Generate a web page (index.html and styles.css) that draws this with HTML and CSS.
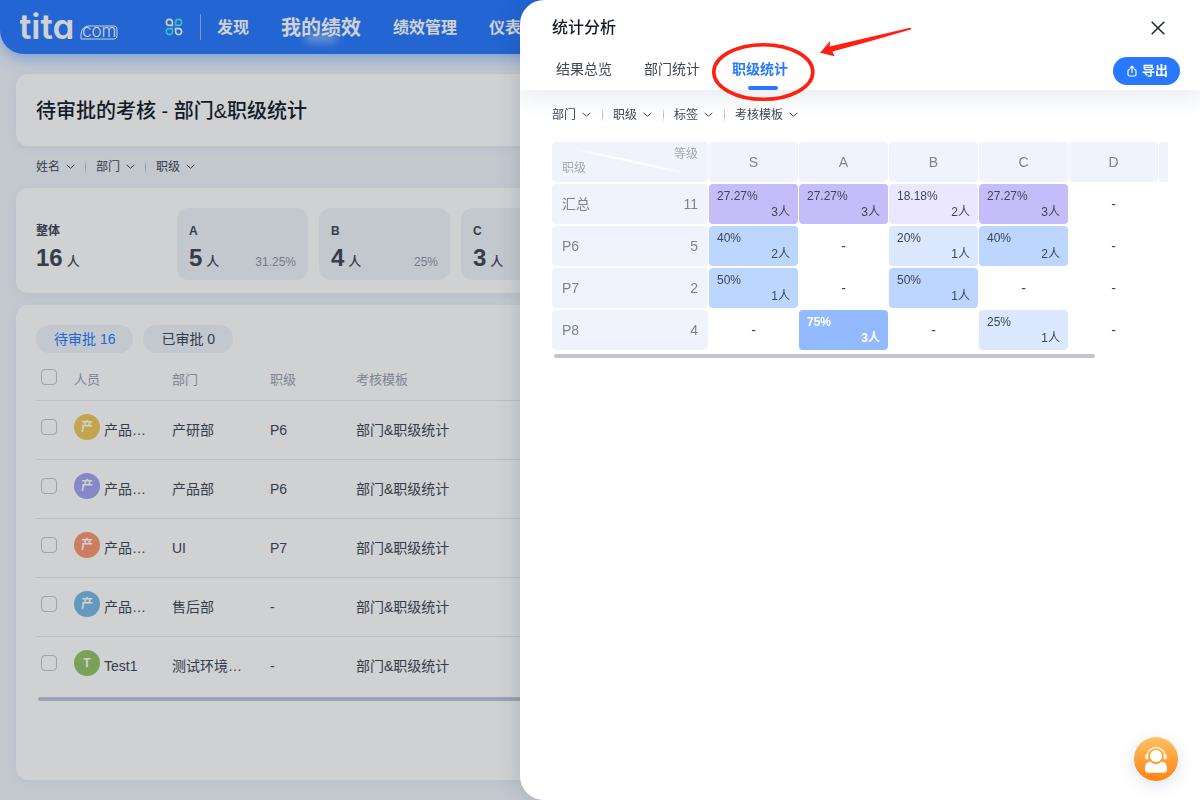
FILE: index.html
```html
<!DOCTYPE html>
<html lang="zh-CN">
<head>
<meta charset="utf-8">
<title>统计分析</title>
<link rel="stylesheet" href="styles.css">
</head>
<body>
<svg class="defs" aria-hidden="true">
  <symbol id="chev" viewBox="0 0 9 6"><path d="M1 1.2 4.5 4.2 8 1.2" fill="none" stroke="currentColor" stroke-width="1" stroke-linecap="round" stroke-linejoin="round"/></symbol>
</svg>
<div class="page">
  <header class="topbar">
    <svg class="logo" width="100" height="44" viewBox="0 0 100 44" role="img" aria-label="tita.com">
      <text class="logo-main" x="-1" y="34">tita</text>
      <path d="M61 34V29Q62 21 69 21H94Q97 21 97 24V31Q97 34 94 34H61" fill="none" stroke="#fff" stroke-width="1"/>
      <text class="logo-sub" x="62" y="32">com</text>
    </svg>
    <button class="apps" aria-label="应用">
      <svg width="18" height="18" viewBox="0 0 18 18" fill="none" stroke-width="1.6">
        <path d="M7.4 7.4H4.4A3 3 0 1 1 7.4 4.4Z" stroke="#fff"/>
        <path d="M10.6 7.4V4.4A3 3 0 1 1 13.6 7.4Z" stroke="#4ce6ec"/>
        <path d="M7.4 10.6V13.6A3 3 0 1 1 4.4 10.6Z" stroke="#4ce6ec"/>
        <path d="M10.6 10.6H13.6A3 3 0 1 1 10.6 13.6Z" stroke="#fff"/>
      </svg>
    </button>
    <nav class="nav">
      <a href="#">发现</a>
      <a href="#" class="current">我的绩效</a>
      <a href="#">绩效管理</a>
      <a href="#">仪表盘</a>
    </nav>
  </header>
  <main class="main">
    <section class="card title-card"><h1>待审批的考核 - 部门&amp;职级统计</h1></section>
    <div class="filters page-filters">
      <button>姓名<svg><use href="#chev"/></svg></button>
      <button>部门<svg><use href="#chev"/></svg></button>
      <button>职级<svg><use href="#chev"/></svg></button>
    </div>
    <section class="card stats">
      <div class="stat total"><h2>整体</h2><p><b>16</b><i>人</i></p></div>
      <div class="stat"><h2>A</h2><p><b>5</b><i>人</i><span>31.25%</span></p></div>
      <div class="stat"><h2>B</h2><p><b>4</b><i>人</i><span>25%</span></p></div>
      <div class="stat"><h2>C</h2><p><b>3</b><i>人</i></p></div>
    </section>
    <section class="card list">
      <div class="pills">
        <button class="on">待审批 16</button>
        <button>已审批 0</button>
      </div>
      <table class="people">
        <colgroup><col class="c-check"><col class="c-name"><col class="c-dept"><col class="c-level"><col></colgroup>
        <thead>
          <tr><th><input type="checkbox" aria-label="全选"></th><th>人员</th><th>部门</th><th>职级</th><th>考核模板</th></tr>
        </thead>
        <tbody>
          <tr><td><input type="checkbox" aria-label="选择第1行"></td><td><div class="who"><span class="avatar gold">产</span>产品…</div></td><td>产研部</td><td>P6</td><td>部门&amp;职级统计</td></tr>
          <tr><td><input type="checkbox" aria-label="选择第2行"></td><td><div class="who"><span class="avatar violet">产</span>产品…</div></td><td>产品部</td><td>P6</td><td>部门&amp;职级统计</td></tr>
          <tr><td><input type="checkbox" aria-label="选择第3行"></td><td><div class="who"><span class="avatar coral">产</span>产品…</div></td><td>UI</td><td>P7</td><td>部门&amp;职级统计</td></tr>
          <tr><td><input type="checkbox" aria-label="选择第4行"></td><td><div class="who"><span class="avatar sky">产</span>产品…</div></td><td>售后部</td><td>-</td><td>部门&amp;职级统计</td></tr>
          <tr><td><input type="checkbox" aria-label="选择第5行"></td><td><div class="who"><span class="avatar green">T</span>Test1</div></td><td>测试环境…</td><td>-</td><td>部门&amp;职级统计</td></tr>
        </tbody>
      </table>
      <div class="scrollbar"></div>
    </section>
  </main>
</div>
<div class="mask"></div>
<aside class="drawer" aria-label="统计分析">
  <header class="drawer-head">
    <div class="drawer-title">
      <h2>统计分析</h2>
      <button class="close" aria-label="关闭"><svg width="14" height="14" viewBox="0 0 14 14"><path d="M.7.7 13.3 13.3M13.3.7.7 13.3" stroke="#1d2633" stroke-width="1.5"/></svg></button>
    </div>
    <div class="drawer-bar">
      <nav class="tabs">
        <button>结果总览</button>
        <button>部门统计</button>
        <button class="on">职级统计</button>
      </nav>
      <button class="export"><svg width="10" height="12" viewBox="0 0 10 12" fill="none" stroke="#fff" stroke-width="1.2" stroke-linecap="round" stroke-linejoin="round"><path d="M2.500 4.500Q1 4.500 1 6V9.500Q1 11 2.500 11H7.500Q9 11 9 9.500V6Q9 4.500 7.500 4.500M5 7.500V1.500M3.200 3 5 1.200 6.800 3"/></svg>导出</button>
    </div>
  </header>
  <div class="drawer-body">
    <div class="filters drawer-filters">
      <button>部门<svg><use href="#chev"/></svg></button>
      <button>职级<svg><use href="#chev"/></svg></button>
      <button>标签<svg><use href="#chev"/></svg></button>
      <button>考核模板<svg><use href="#chev"/></svg></button>
    </div>
    <div class="matrix-view">
      <table class="matrix">
        <colgroup><col class="m-first"><col><col><col><col><col><col></colgroup>
        <thead>
          <tr>
            <th class="corner"><div><svg viewBox="0 0 156 40" preserveAspectRatio="none"><defs><linearGradient id="fade"><stop offset="0" stop-color="#fff" stop-opacity="0"/><stop offset=".4" stop-color="#fff"/><stop offset=".65" stop-color="#fff"/><stop offset="1" stop-color="#fff" stop-opacity="0"/></linearGradient></defs><path d="M12 5 144 33" stroke="url(#fade)" stroke-width="2"/></svg><span class="col-label">等级</span><span class="row-label">职级</span></div></th>
            <th>S</th><th>A</th><th>B</th><th>C</th><th>D</th><th></th>
          </tr>
        </thead>
        <tbody>
          <tr><th><div class="row-head"><span>汇总</span><span>11</span></div></th>
            <td class="p2"><div class="cell"><span>27.27%</span><span>3人</span></div></td>
            <td class="p2"><div class="cell"><span>27.27%</span><span>3人</span></div></td>
            <td class="p1"><div class="cell"><span>18.18%</span><span>2人</span></div></td>
            <td class="p2"><div class="cell"><span>27.27%</span><span>3人</span></div></td>
            <td>-</td><td></td></tr>
          <tr><th><div class="row-head"><span>P6</span><span>5</span></div></th>
            <td class="b2"><div class="cell"><span>40%</span><span>2人</span></div></td>
            <td>-</td>
            <td class="b1"><div class="cell"><span>20%</span><span>1人</span></div></td>
            <td class="b2"><div class="cell"><span>40%</span><span>2人</span></div></td>
            <td>-</td><td></td></tr>
          <tr><th><div class="row-head"><span>P7</span><span>2</span></div></th>
            <td class="b2"><div class="cell"><span>50%</span><span>1人</span></div></td>
            <td>-</td>
            <td class="b2"><div class="cell"><span>50%</span><span>1人</span></div></td>
            <td>-</td><td>-</td><td></td></tr>
          <tr><th><div class="row-head"><span>P8</span><span>4</span></div></th>
            <td>-</td>
            <td class="b3"><div class="cell"><span>75%</span><span>3人</span></div></td>
            <td>-</td>
            <td class="b1"><div class="cell"><span>25%</span><span>1人</span></div></td>
            <td>-</td><td></td></tr>
        </tbody>
      </table>
    </div>
    <div class="scrollbar matrix-scroll"></div>
  </div>
  <svg class="marker" width="210" height="80" viewBox="0 0 210 80" aria-hidden="true">
    <ellipse cx="53.300" cy="47" rx="49.500" ry="27.300" fill="none" stroke="#ff2012" stroke-width="3.600"/>
    <path d="M110 27.700 120.200 16 119.600 21.500 200 2.800Q202 3 200.700 4.500Q162 16 122.500 26.500L124.500 31.200Z" fill="#ff2012"/>
  </svg>
  <button class="support" aria-label="在线客服">
    <svg width="44" height="44" viewBox="0 0 44 44">
      <defs><linearGradient id="orange" x1="0" y1="0" x2="0" y2="1"><stop offset="0" stop-color="#ffc062"/><stop offset="1" stop-color="#ff8412"/></linearGradient></defs>
      <circle cx="22" cy="22" r="22" fill="url(#orange)"/>
      <path d="M13 19a9 8.500 0 0 1 18 0" fill="none" stroke="#fff2de" stroke-width="1.500"/>
      <rect x="11.200" y="17" width="3.200" height="5.500" rx="1.500" fill="#fff2de"/>
      <rect x="29.600" y="17" width="3.200" height="5.500" rx="1.500" fill="#fff2de"/>
      <circle cx="22" cy="19" r="6" fill="#fff"/>
      <path d="M14 25.200Q16.500 24.200 18 25.800Q22 28.500 26 25.800Q27.500 24.200 30 25.200Q33 27 33 32Q33 35.800 30 35.800H14Q11 35.800 11 32Q11 27 14 25.200Z" fill="#fff"/>
    </svg>
  </button>
</aside>
</body>
</html>
```

FILE: styles.css
```css
* { box-sizing: border-box; }
body {
  margin: 0;
  height: 100vh;
  overflow: hidden;
  background: #f0f4fb;
  color: #3f4755;
  font: 14px/20px "Liberation Sans", "Noto Sans CJK SC", sans-serif;
}
h1, h2, p { margin: 0; }
button { margin: 0; padding: 0; border: 0; background: none; color: inherit; font: inherit; cursor: pointer; }
a { color: inherit; text-decoration: none; }
table { border-collapse: separate; table-layout: fixed; }
th { font-weight: 400; text-align: left; }
.defs { position: absolute; width: 0; height: 0; }

.page { display: flex; flex-direction: column; min-height: 100vh; }
.topbar {
  display: flex;
  align-items: center;
  height: 54px;
  padding-left: 20px;
  border-radius: 0 0 24px 24px;
  background: #2879ff;
  box-shadow: 0 4px 16px rgba(40, 121, 255, .45);
  color: #fff;
}
.logo { flex: none; margin-right: 45px; fill: #fff; }
.logo-main { font: 600 35px/1 Inter, sans-serif; font-feature-settings: "cv11"; }
.logo-sub { font: 300 17px/1 Inter, sans-serif; }
.apps { display: flex; }
.nav {
  display: flex;
  align-items: center;
  gap: 32px;
  height: 26px;
  margin-left: 17px;
  padding: 2px 0 0 16px;
  border-left: 1px solid rgba(255, 255, 255, .5);
  font-size: 16px;
  font-weight: 700;
  white-space: nowrap;
}
.current { position: relative; font-size: 20px; }
.current::after {
  content: "";
  position: absolute;
  left: 24px;
  right: 24px;
  bottom: -4px;
  height: 8px;
  border-radius: 4px;
  background: rgba(255, 255, 255, .5);
  filter: blur(4px);
}

.main { display: flex; flex: 1; flex-direction: column; padding: 20px 16px; }
.card { border-radius: 12px; background: #fff; box-shadow: 0 2px 8px rgba(127, 145, 180, .1); }
.title-card { padding: 23px 20px 21px; }
.title-card h1 { color: #141c28; font-size: 20px; line-height: 28px; font-weight: 500; }

.filters { display: flex; align-items: center; font-size: 12px; }
.filters button { display: flex; align-items: center; gap: 6px; }
.filters svg { width: 9px; height: 6px; }
.filters button + button::before {
  content: "";
  width: 1px;
  height: 14px;
  margin: 0 4px 0 10px;
  background: linear-gradient(transparent, #a9b2c5, transparent);
}
.page-filters { height: 42px; padding-left: 20px; }

.stats { display: flex; gap: 11px; padding: 20px 20px 13px; }
.stat { width: 131px; height: 72px; padding: 13px 12px; border-radius: 12px; background: #f0f4fa; }
.stat.total { width: 130px; padding-left: 0; background: none; }
.stat h2 { font-size: 12px; font-weight: 700; }
.stat p { display: flex; align-items: baseline; padding-top: 5px; line-height: 24px; }
.stat b { font-size: 24px; }
.stat i { margin-left: 4px; font-size: 13px; font-style: normal; font-weight: 500; }
.stat span { margin-left: auto; color: #8c94a3; font-size: 12px; }

.list { flex: 1; margin-top: 12px; padding: 20px; }
.pills { display: flex; gap: 10px; }
.pills button { height: 28px; padding: 0 18px; border-radius: 14px; background: #f0f4fa; }
.pills .on { color: #2879ff; }
.people { width: 100%; margin-top: 4px; border-spacing: 0; }
.c-check { width: 38px; }
.c-name, .c-dept { width: 98px; }
.c-level { width: 86px; }
.people th { height: 44px; padding: 2px 0 0; border-bottom: 1px solid #e6e8ec; color: #9aa1b0; font-size: 13px; }
.people td { height: 59px; padding: 0; border-bottom: 1px solid #e6e8ec; }
.people tr:last-child td { height: 58px; border-bottom: 0; }
.people thead tr:last-child th { height: 44px; border-bottom: 1px solid #e6e8ec; }
.people input {
  display: block;
  width: 16px;
  height: 16px;
  margin: 0 0 6px 5px;
  appearance: none;
  border: 1px solid #bec5d4;
  border-radius: 4px;
  background: #fff;
}
.who { display: flex; align-items: center; gap: 4px; }
.avatar {
  width: 26px;
  height: 26px;
  margin-bottom: 6px;
  border-radius: 50%;
  color: #fff;
  font-size: 12px;
  font-weight: 700;
  line-height: 26px;
  text-align: center;
}
.gold { background: #f0c75a; }
.violet { background: #a3a4ef; }
.coral { background: #fb9870; }
.sky { background: #7ab8e3; }
.green { background: #97c268; }
.scrollbar { height: 4px; margin: 2px 2px 0; border-radius: 2px; background: #bec5d4; }

.mask { position: fixed; inset: 0; background: rgba(16, 24, 36, .2); }
.drawer {
  position: fixed;
  top: 0;
  right: 0;
  bottom: 0;
  width: 680px;
  overflow: hidden;
  border-radius: 24px 0 0 24px;
  background: #fff;
  box-shadow: 0 0 24px rgba(16, 24, 36, .16);
}
.drawer-head { padding: 0 20px 0 32px; box-shadow: 0 8px 24px rgba(127, 145, 180, .18); }
.drawer-title { display: flex; align-items: center; justify-content: space-between; height: 55px; padding-right: 15px; }
.drawer-title h2 { color: #141c28; font-size: 16px; font-weight: 500; }
.close { display: flex; }
.drawer-bar { display: flex; justify-content: space-between; height: 35px; }
.tabs { display: flex; gap: 32px; padding-left: 4px; }
.tabs button { display: flex; flex-direction: column; align-items: center; justify-content: space-between; padding-top: 4px; }
.tabs .on { color: #2879ff; font-weight: 700; }
.tabs .on::after { content: ""; width: 30px; height: 4px; margin-left: 6px; border-radius: 2px; background: #2879ff; }
.export {
  display: flex;
  align-items: center;
  gap: 5px;
  height: 28px;
  margin-top: 2px;
  padding: 0 12px 0 14px;
  border-radius: 14px;
  background: #2879ff;
  color: #fff;
  font-size: 13px;
  font-weight: 700;
}
.drawer-body { padding: 0 32px 0 31px; }
.drawer-filters { height: 50px; padding-left: 1px; }
.drawer-filters button + button::before { margin: 0 4px 0 11px; }
.matrix-view { overflow: hidden; }
.matrix { width: 698px; border-spacing: 1px 2px; }
.m-first { width: 156px; }
.matrix th, .matrix td { height: 40px; padding: 0; border-radius: 4px; text-align: center; }
.matrix th { background: #f0f3fb; color: #7c8390; }
.corner div { position: relative; height: 40px; color: #a3aab8; font-size: 12px; }
.corner svg { display: block; width: 100%; height: 40px; }
.col-label { position: absolute; top: 2px; right: 10px; }
.row-label { position: absolute; bottom: 4px; left: 10px; }
.row-head { display: flex; justify-content: space-between; padding: 0 10px; }
.cell { display: flex; flex-direction: column; padding: 0 8px; font-size: 12px; line-height: 16px; text-align: left; }
.cell span + span { text-align: right; }
.p1 { background: #ebe7ff; }
.p2 { background: #c5bcfa; }
.b1 { background: #dce8ff; }
.b2 { background: #bcd6ff; }
.matrix .b3 { background: #93baff; color: #fff; font-weight: 600; }
.matrix-scroll { width: 541px; margin-left: 3px; }

.marker { position: absolute; top: 25px; left: 190px; pointer-events: none; }
.support {
  position: absolute;
  right: 22px;
  bottom: 19px;
  display: flex;
  border-radius: 50%;
  box-shadow: 0 4px 16px rgba(127, 145, 180, .25);
}
```
